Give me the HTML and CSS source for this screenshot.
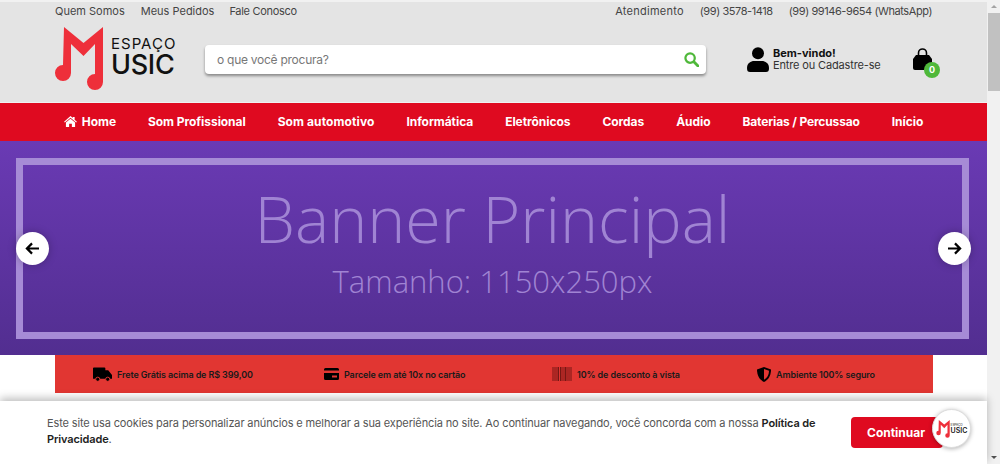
FILE: index.html
```html
<!DOCTYPE html>
<html lang="pt-BR">
<head>
	<meta charset="UTF-8">
	<title>Espaço Music</title>
	<link rel="stylesheet" href="styles.css">
</head>
<body>
	<div class="page">
		<header class="header">
			<div class="top">
				<div class="links">
					<a>Quem Somos</a>
					<a>Meus Pedidos</a>
					<a class="tight">Fale Conosco</a>
				</div>
				<div class="links">
					<a class="wide">Atendimento</a>
					<a class="tel">(99) 3578-1418</a>
					<a class="tel">(99) 99146-9654 (WhatsApp)</a>
				</div>
			</div>
			<div class="main">
				<div class="logo">
					<svg class="logo-mark" viewBox="0 0 50 64">
						<path fill="#ee2f3a" d="M10 0 L29.500 16 L49 0 V55 A8 8 0 1 1 41 47 V17 L29.500 29 L17 17 V46 A8 8 0 1 1 9 38 Z"/>
					</svg>
					<div class="logo-text">
						<span class="logo-top">ESPAÇO</span>
						<span class="logo-bottom">USIC</span>
					</div>
				</div>
				<div class="search">
					<span>o que você procura?</span>
					<svg class="search-icon" viewBox="0 0 16 16">
						<circle cx="6.500" cy="6.500" r="5" fill="none" stroke="#4fb83a" stroke-width="2.400"/>
						<path d="M10.500 10.500 L15 15" stroke="#4fb83a" stroke-width="3" stroke-linecap="round"/>
					</svg>
				</div>
				<div class="account">
					<svg class="user-icon" viewBox="0 0 22 25">
						<circle cx="11" cy="6.200" r="6" fill="#000"/>
						<path fill="#000" d="M0 21 C0 16 4 14 7 14 H15 C18 14 22 16 22 21 C22 24 21 25 19 25 H3 C1 25 0 24 0 21 Z"/>
					</svg>
					<div class="account-text">
						<b>Bem-vindo!</b>
						<span>Entre ou Cadastre-se</span>
					</div>
				</div>
				<div class="cart">
					<svg class="bag-icon" viewBox="0 0 19 22">
						<path fill="none" stroke="#000" stroke-width="1.600" d="M5.500 9 V5 A4 4 0 0 1 13.500 5 V9"/>
						<path fill="#000" d="M3 7 H16 L19 11 V20 A2 2 0 0 1 17 22 H2 A2 2 0 0 1 0 20 V11 Z"/>
					</svg>
					<span class="cart-count">0</span>
				</div>
			</div>
		</header>

		<nav class="nav">
			<a>
				<svg class="home-icon" viewBox="0 0 14 12">
					<path fill="#fff" d="M7 0 L9.500 2.200 V1 H11.500 V4 L14 6.200 L13.200 7 L7 1.800 L0.800 7 L0 6.200 Z M2 7 L7 2.900 L12 7 V12 H8.500 V8.500 H5.500 V12 H2 Z"/>
				</svg>Home</a>
			<a>Som Profissional</a>
			<a class="nav-wide">Som automotivo</a>
			<a>Informática</a>
			<a>Eletrônicos</a>
			<a>Cordas</a>
			<a>Áudio</a>
			<a class="nav-tight">Baterias / Percussao</a>
			<a>Início</a>
		</nav>

		<section class="banner">
			<div class="frame">
				<div class="banner-title">Banner Principal</div>
				<div class="banner-size">Tamanho: 1150x250px</div>
			</div>
			<div class="arrow left">
				<svg viewBox="0 0 16 14"><path d="M15 7 H2 M7.500 1.500 L2 7 L7.500 12.500" fill="none" stroke="#000" stroke-width="2.400"/></svg>
			</div>
			<div class="arrow right">
				<svg viewBox="0 0 16 14"><path d="M1 7 H14 M8.500 1.500 L14 7 L8.500 12.500" fill="none" stroke="#000" stroke-width="2.400"/></svg>
			</div>
		</section>

		<div class="benefits">
			<div class="benefit">
				<svg class="truck" viewBox="0 0 20 15">
					<path fill="#000" d="M0 1 A1 1 0 0 1 1 0 H12 A1 1 0 0 1 13 1 V3 H16 L20 8 V12 H0 Z"/>
					<circle cx="5" cy="12.500" r="2.200" fill="#000" stroke="#e13632"/>
					<circle cx="15.500" cy="12.500" r="2.200" fill="#000" stroke="#e13632"/>
				</svg>
				<span>Frete Grátis acima de R$ 399,00</span>
			</div>
			<div class="benefit">
				<svg class="card" viewBox="0 0 15 12">
					<path fill="#000" d="M0 1.500 A1.500 1.500 0 0 1 1.500 0 H13.500 A1.500 1.500 0 0 1 15 1.500 V2.500 H0 Z M0 5 H15 V10.500 A1.500 1.500 0 0 1 13.500 12 H1.500 A1.500 1.500 0 0 1 0 10.500 Z"/>
					<rect x="8" y="7.500" width="5" height="2" fill="#e13632"/>
				</svg>
				<span>Parcele em até 10x no cartão</span>
			</div>
			<div class="benefit">
				<svg class="barcode" viewBox="0 0 20 14">
					<path stroke="#5a0f0d" stroke-width="0.800" d="M1 0 V14 M3 0 V14 M5 0 V14 M6.500 0 V14 M8.500 0 V14 M10 0 V14 M12 0 V14 M13.500 0 V14 M15 0 V14 M17 0 V14 M19 0 V14"/>
				</svg>
				<span>10% de desconto à vista</span>
			</div>
			<div class="benefit">
				<svg class="shield" viewBox="0 0 14 15">
					<path fill="#000" d="M7 0 L14 2.500 C14 9 11 13 7 15 C3 13 0 9 0 2.500 Z"/>
					<path fill="#e13632" d="M7 2 L12 3.800 C12 8 10 11 7 12.800 Z"/>
				</svg>
				<span>Ambiente 100% seguro</span>
			</div>
		</div>
	</div>

	<!-- barra de rolagem -->
	<div class="scrollbar">
		<div class="scroll-up"></div>
		<div class="scroll-thumb"></div>
		<div class="scroll-down"></div>
	</div>

	<!-- aviso de cookies -->
	<div class="cookies">
		<p>Este site usa cookies para personalizar anúncios e melhorar a sua experiência no site. Ao continuar navegando, você concorda com a nossa <b>Política de Privacidade</b>.</p>
		<a class="continue">Continuar</a>
		<div class="badge">
			<svg class="badge-mark" viewBox="0 0 50 64">
				<path fill="#ee2f3a" d="M10 0 L29.500 16 L49 0 V55 A8 8 0 1 1 41 47 V17 L29.500 29 L17 17 V46 A8 8 0 1 1 9 38 Z"/>
			</svg>
			<div class="badge-text">
				<span>ESPAÇO</span>
				<b>USIC</b>
			</div>
		</div>
	</div>
</body>
</html>
```

FILE: styles.css
```css
*{
	margin: 0;
	padding: 0;
	box-sizing: border-box;
}
body{
	width: 1000px;
	height: 464px;
	overflow: hidden;
	display: flex;
	font-family: "Inter", "Liberation Sans", sans-serif;
	background: #ffffff;
	position: relative;
}
.page{
	width: 987px;
	flex: none;
}

/*topo*/
.header{
	height: 103px;
	background: #e4e4e4;
	border-top: 2px solid #f1f1f1;
	border-bottom: 1px solid #f0f0f0;
	padding: 0 55px 0 54px;
}
.top{
	display: flex;
	justify-content: space-between;
	height: 18px;
	align-items: center;
	font-size: 11px;
	color: #444444;
	padding-left: 1px;
}
.links{
	display: flex;
	gap: 16px;
}
.tight{
	letter-spacing: -0.3px;
	margin-left: -1px;
}
.wide{
	letter-spacing: 0.25px;
}
.tel{
	letter-spacing: -0.42px;
}
.main{
	display: flex;
	align-items: center;
	height: 78px;
}
.logo{
	width: 151px;
	display: flex;
	align-items: center;
	gap: 7px;
}
.logo-mark{
	width: 50px;
	height: 64px;
	flex: none;
}
.logo-text{
	display: flex;
	flex-direction: column;
	color: #111111;
	margin-top: -4px;
}
.logo-top{
	font-size: 15px;
	line-height: 16px;
	letter-spacing: 1px;
}
.logo-bottom{
	font-size: 27px;
	line-height: 26px;
	font-weight: 500;
	letter-spacing: -0.3px;
}
.search{
	width: 501px;
	height: 29px;
	background: #ffffff;
	border-radius: 4px;
	box-shadow: 0 2px 3px rgba(0,0,0,0.4);
	display: flex;
	align-items: center;
	justify-content: space-between;
	padding: 0 7px 0 12px;
	font-size: 12px;
	letter-spacing: -0.26px;
	color: #777777;
}
.search-icon{
	width: 15px;
	height: 15px;
}
.account{
	display: flex;
	align-items: center;
	gap: 4px;
	width: 134px;
	margin-left: 41px;
}
.user-icon{
	width: 22px;
	height: 25px;
	flex: none;
}
.account-text{
	display: flex;
	flex-direction: column;
	font-size: 11px;
	line-height: 12px;
	color: #333333;
	white-space: nowrap;
}
.account-text span{
	letter-spacing: -0.15px;
}
.account-text b{
	color: #111111;
}
.cart{
	position: relative;
	margin-left: 32px;
	height: 22px;
}
.bag-icon{
	display: block;
	width: 19px;
	height: 22px;
}
.cart-count{
	position: absolute;
	left: 11px;
	top: 14px;
	width: 16px;
	height: 16px;
	border-radius: 50%;
	background: #4fb83a;
	color: #ffffff;
	font-size: 9px;
	font-weight: 700;
	line-height: 16px;
	text-align: center;
}

/*menu*/
.nav{
	height: 38px;
	padding-bottom: 2px;
	background: #df0a20;
	display: flex;
	align-items: center;
	justify-content: center;
	gap: 32px;
	font-size: 12px;
	font-weight: 700;
	letter-spacing: -0.06px;
	color: #ffffff;
}
.nav a{
	display: flex;
	align-items: center;
	gap: 5px;
}
.nav .nav-wide{
	letter-spacing: 0.1px;
}
.nav .nav-tight{
	letter-spacing: -0.15px;
}
.home-icon{
	width: 13px;
	height: 11px;
}

/*banner*/
.banner{
	height: 214px;
	background: linear-gradient(#6a3ab4, #522e90);
	padding: 17px 18px 16px 16px;
	position: relative;
}
.frame{
	height: 181px;
	border: 7px solid #a68bd6;
	display: flex;
	flex-direction: column;
	align-items: center;
	font-family: "Open Sans", sans-serif;
	font-weight: 300;
	color: #a084d3;
}
.banner-title{
	font-size: 64.500px;
	line-height: 84px;
	margin-top: 11px;
}
.banner-size{
	font-size: 31px;
	line-height: 40px;
	margin-top: 1px;
}
.arrow{
	position: absolute;
	top: 91px;
	width: 33px;
	height: 33px;
	background: #ffffff;
	border-radius: 50%;
	box-shadow: 0 0 8px rgba(0,0,0,0.25);
	display: flex;
	align-items: center;
	justify-content: center;
}
.arrow svg{
	width: 15px;
	height: 13px;
}
.left{
	left: 16px;
}
.right{
	left: 938px;
}

/*faixa de vantagens*/
.benefits{
	width: 878px;
	height: 38px;
	margin-left: 55px;
	background: #e13632;
	display: flex;
	align-items: center;
	font-size: 9px;
	font-weight: 600;
	letter-spacing: -0.12px;
	color: #1a1a1a;
	padding-left: 38px;
}
.benefit{
	display: flex;
	align-items: center;
	gap: 5px;
}
.benefit:nth-child(1){
	width: 231px;
}
.benefit:nth-child(2){
	width: 228px;
}
.benefit:nth-child(3){
	width: 205px;
}
.truck{
	width: 19px;
	height: 15px;
}
.card{
	width: 15px;
	height: 12px;
}
.barcode{
	width: 20px;
	height: 14px;
}
.shield{
	width: 14px;
	height: 15px;
}

/*barra de rolagem*/
.scrollbar{
	width: 13px;
	height: 464px;
	flex: none;
	background: #f1f1f1;
	display: flex;
	flex-direction: column;
	align-items: center;
}
.scroll-up{
	margin-top: 5px;
	border-left: 3px solid transparent;
	border-right: 3px solid transparent;
	border-bottom: 3px solid #a3a3a3;
}
.scroll-thumb{
	width: 12px;
	height: 78px;
	margin-top: 5px;
	margin-left: 1px;
	background: #c1c1c1;
}
.scroll-down{
	margin-top: auto;
	margin-bottom: 5px;
	border-left: 3px solid transparent;
	border-right: 3px solid transparent;
	border-top: 3px solid #505050;
}

/*aviso de cookies*/
.cookies{
	position: absolute;
	left: 0;
	top: 401px;
	width: 987px;
	height: 63px;
	background: #ffffff;
	box-shadow: 0 -3px 8px rgba(0,0,0,0.25);
	display: flex;
	align-items: flex-start;
	padding: 14px 0 0 47px;
	font-size: 11px;
	line-height: 16px;
	letter-spacing: -0.13px;
	color: #555555;
}
.cookies p{
	width: 775px;
}
.cookies b{
	font-weight: 600;
	color: #222222;
}
.continue{
	position: absolute;
	left: 851px;
	top: 16px;
	width: 92px;
	height: 31px;
	background: #df0a20;
	border-radius: 4px;
	color: #ffffff;
	font-size: 12px;
	font-weight: 700;
	line-height: 31px;
	letter-spacing: 0;
	padding-left: 16px;
}
.badge{
	position: absolute;
	left: 932px;
	top: 8px;
	width: 39px;
	height: 39px;
	border-radius: 50%;
	background: #ffffff;
	border: 1px solid #dddddd;
	box-shadow: 0 1px 4px rgba(0,0,0,0.3);
	display: flex;
	align-items: center;
	justify-content: center;
	gap: 1px;
}
.badge-mark{
	width: 14px;
	height: 18px;
}
.badge-text{
	display: flex;
	flex-direction: column;
	color: #111111;
	font-size: 3px;
	line-height: 4px;
	letter-spacing: 0;
}
.badge-text b{
	font-size: 7px;
	line-height: 7px;
}
```
